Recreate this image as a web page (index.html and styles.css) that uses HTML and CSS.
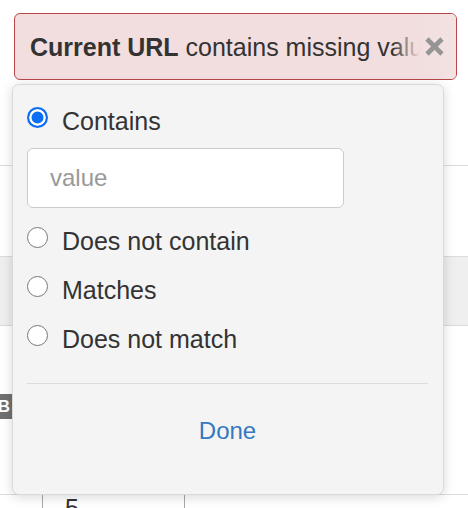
FILE: index.html
```html
<!DOCTYPE html>
<html>
<head>
<meta charset="utf-8">
<link rel="stylesheet" href="styles.css">
</head>
<body>
<div class="page">
  <div class="bg-row r1"></div>
  <div class="bg-row r2"></div>
  <div class="bg-row band"></div>
  <div class="bg-row r4"></div>
  <div class="table-row">
    <div class="cell c0"></div>
    <div class="cell c1">5</div>
    <div class="cell c2"></div>
  </div>

  <span class="badge">B</span>

  <div class="pill">
    <div class="pill-text"><b>Current URL</b> contains missing value</div>
    <div class="pill-fade"></div>
    <button class="pill-close" aria-label="remove">
      <svg width="19" height="19" viewBox="0 0 19 19"><path d="M2 2 L17 17 M17 2 L2 17" stroke="#959595" stroke-width="4.6" stroke-linecap="butt" fill="none"/></svg>
    </button>
  </div>

  <div class="popover">
    <label class="opt first"><span class="radio on"></span><span>Contains</span></label>
    <input class="value" type="text" placeholder="value">
    <label class="opt o2"><span class="radio"></span><span>Does not contain</span></label>
    <label class="opt o3"><span class="radio"></span><span>Matches</span></label>
    <label class="opt o3"><span class="radio"></span><span>Does not match</span></label>
    <div class="divider"></div>
    <div class="done">Done</div>
  </div>
</div>
</body>
</html>
```
FILE: styles.css
```css
* { box-sizing: border-box; }
html, body { margin: 0; padding: 0; background: #fff; }
body { font-family: "Liberation Sans", Arial, sans-serif; color: #333; overflow: hidden; }
.page { position: relative; width: 468px; height: 508px; overflow: hidden; }

.bg-row { border-bottom: 1px solid #dcdcdc; }
.r1 { height: 166px; }
.r2 { height: 91px; }
.band { height: 69px; background: #efefef; }
.r4 { height: 169px; }

.table-row { display: flex; height: 40px; background: #fff; }
.cell { font-size: 25px; line-height: 20px; padding-top: 3px; }
.c0 { width: 42px; }
.c1 { width: 143px; border-left: 1px solid #a8a8a8; border-right: 1px solid #a8a8a8; padding-left: 22px; }
.c2 { flex: 1; }

.badge {
  position: absolute; left: -4px; top: 394px; height: 25px; width: 16px;
  background: #707070; color: #fff; font-weight: bold; font-size: 17px;
  line-height: 25px; text-align: center;
}

.pill {
  position: absolute; left: 14px; top: 13px; width: 443px; height: 67px;
  background: #f2dede; border: 1px solid #b9474a; border-radius: 6px;
  display: flex; align-items: center; overflow: hidden;
}
.pill-text {
  padding-left: 15px; font-size: 25px; white-space: nowrap; color: #333;
  line-height: 30px;
}
.pill-text b { font-weight: bold; }
.pill-fade {
  position: absolute; right: 0; top: 0; bottom: 0; width: 64px;
  background: linear-gradient(to right, rgba(242,222,222,0) 0, #f2dede 28px, #f3e3e3 100%);
}
.pill-close {
  position: absolute; right: 12px; top: 23px; width: 19px; height: 19px;
  padding: 0; border: 0; background: transparent; display: block;
}
.pill-close svg { display: block; }

.popover {
  position: absolute; left: 12px; top: 84px; width: 432px; height: 411px;
  background: #f4f4f4; border: 1px solid #d9d9d9; border-radius: 7px;
  box-shadow: 0 2px 12px rgba(0,0,0,0.16);
  padding: 21px 15px 0 14px;
  display: flex; flex-direction: column; align-items: flex-start;
}
.opt {
  display: flex; align-items: flex-start; height: 30px; line-height: 30px;
  font-size: 25px; color: #333;
}
.o2 { margin-top: 18px; }
.o3 { margin-top: 19px; }
.radio {
  width: 21px; height: 21px; border-radius: 50%; margin-top: 1px; margin-right: 14px;
  border: 1.5px solid #777; background: #fff; flex: none;
}
.radio.on {
  border: 2.5px solid #0b6ef6; background: #0b6ef6;
  box-shadow: inset 0 0 0 2.5px #fff;
}
.value {
  margin-top: 12px; width: 317px; height: 60px; border: 1px solid #cbcbcb;
  border-radius: 6px; background: #fff; padding: 0 0 0 22px;
  font-family: "Liberation Sans", Arial, sans-serif; font-size: 24px; color: #333;
  outline: none;
}
.value::placeholder { color: #999; }
.divider { margin-top: 29px; width: 401px; height: 1px; background: #dcdcdc; flex: none; }
.done {
  margin-top: 32px; width: 401px; text-align: center; font-size: 24px;
  line-height: 30px; color: #3579c0;
}
```
